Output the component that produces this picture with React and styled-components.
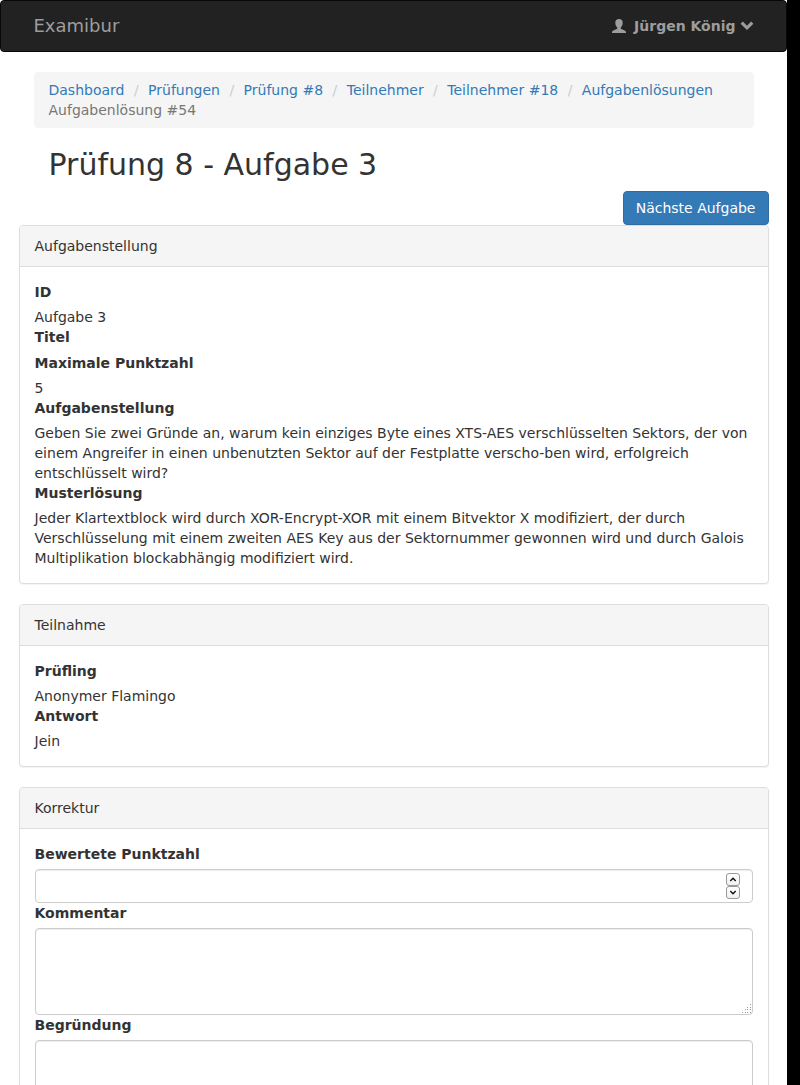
import React from 'react';
import styled, { createGlobalStyle } from 'styled-components';

const GlobalStyle = createGlobalStyle`
  *, *::before, *::after { box-sizing: border-box; }
  html { background: #000; overflow: hidden; }
  body {
    margin: 0;
    color: #333;
    font: 14px/20px "DejaVu Sans", Verdana, sans-serif;
  }
`;

const Page = styled.div`
  width: 787px;
  height: 1085px;
  overflow: hidden;
  background: #fff;
`;

const Navbar = styled.nav`
  height: 52px;
  margin-bottom: 20px;
  background: #222;
  border: 1px solid #080808;
  border-radius: 4px;
`;

const Container = styled.div`
  width: 750px;
  margin: 0 auto;
`;

const NavContent = styled(Container)`
  display: flex;
  align-items: center;
  justify-content: space-between;
  height: 50px;
  padding: 0 15px;
`;

const Brand = styled.a`
  color: #9d9d9d;
  font-size: 18px;
`;

const UserMenu = styled.a`
  display: flex;
  align-items: center;
  color: #9d9d9d;
  font-weight: bold;
`;

const UserName = styled.span`
  margin: 0 4px 0 8px;
`;

const Glyph = styled.svg`
  display: block;
  width: 14px;
  height: 14px;
  fill: currentColor;
`;

const Breadcrumb = styled.ol`
  list-style: none;
  margin: 0 15px 20px;
  padding: 8px 15px;
  background: #f5f5f5;
  border-radius: 4px;
`;

const Crumb = styled.li`
  display: inline-block;
  color: ${(p) => (p.$active ? '#777' : '#337ab7')};

  & + &::before {
    content: "/\\00a0";
    padding: 0 5px;
    color: #ccc;
  }
`;

const Title = styled.h2`
  margin: 0 30px 10px;
  font-size: 30px;
  font-weight: 400;
  line-height: 33px;
`;

const Actions = styled.div`
  display: flex;
  justify-content: flex-end;
`;

const Button = styled.button`
  height: 34px;
  padding: 6px 12px;
  font: inherit;
  color: #fff;
  background: #337ab7;
  border: 1px solid #2e6da4;
  border-radius: 4px;
`;

const Panel = styled.section`
  margin-bottom: 20px;
  background: #fff;
  border: 1px solid #ddd;
  border-radius: 4px;
  box-shadow: 0 1px 1px rgba(0, 0, 0, 0.05);
`;

const PanelHeading = styled.header`
  padding: 10px 15px;
  background: #f5f5f5;
  border-bottom: 1px solid #ddd;
  border-radius: 3px 3px 0 0;
`;

const PanelBody = styled.div`
  padding: 15px;
`;

const Label = styled.label`
  display: block;
  margin-bottom: 5px;
  font-weight: bold;
`;

const Value = styled.div`
  min-height: 1px;
`;

const Control = styled.div`
  display: flex;
  justify-content: flex-end;
  height: ${(p) => p.$height}px;
  background: #fff;
  border: 1px solid #ccc;
  border-radius: 4px;
  box-shadow: inset 0 1px 1px rgba(0, 0, 0, 0.075);
`;

const Spinner = styled.div`
  display: flex;
  flex-direction: column;
  margin: 3px 12px 0 0;
`;

const SpinButton = styled.span`
  display: flex;
  align-items: center;
  justify-content: center;
  width: 14px;
  height: 13px;
  background: linear-gradient(#fff, #f0f0f0);
  border: 1px solid #999;
  border-radius: 3px;
`;

const Arrow = styled.svg`
  width: 8px;
  height: 5px;
  fill: none;
  stroke: #111;
  stroke-width: 1.5;
`;

const Grip = styled.svg`
  width: 10px;
  height: 10px;
  align-self: flex-end;
  fill: #999;
`;

const crumbs = ['Dashboard', 'Prüfungen', 'Prüfung #8', 'Teilnehmer', 'Teilnehmer #18', 'Aufgabenlösungen'];

const task = [
  ['ID', 'Aufgabe 3'],
  ['Titel', ''],
  ['Maximale Punktzahl', '5'],
  ['Aufgabenstellung', 'Geben Sie zwei Gründe an, warum kein einziges Byte eines XTS-AES verschlüsselten Sektors, der von einem Angreifer in einen unbenutzten Sektor auf der Festplatte verscho-ben wird, erfolgreich entschlüsselt wird?'],
  ['Musterlösung', 'Jeder Klartextblock wird durch XOR-Encrypt-XOR mit einem Bitvektor X modifiziert, der durch Verschlüsselung mit einem zweiten AES Key aus der Sektornummer gewonnen wird und durch Galois Multiplikation blockabhängig modifiziert wird.'],
];

const participation = [
  ['Prüfling', 'Anonymer Flamingo'],
  ['Antwort', 'Jein'],
];

const gripDots = [[8, 0], [5, 3], [8, 3], [3, 5], [5, 5], [8, 5], [0, 8], [3, 8], [5, 8], [8, 8]];

function Fields({ items }) {
  return items.map(([label, value]) => (
    <React.Fragment key={label}>
      <Label as="div">{label}</Label>
      <Value>{value}</Value>
    </React.Fragment>
  ));
}

function TextArea() {
  return (
    <Control $height={87}>
      <Grip viewBox="0 0 10 10" shapeRendering="crispEdges">
        {gripDots.map(([x, y]) => <rect key={`${x}-${y}`} x={x} y={y} width="1" height="1" />)}
      </Grip>
    </Control>
  );
}

export default function App() {
  return (
    <>
      <GlobalStyle />
      <Page>
        <Navbar>
          <NavContent>
            <Brand>Examibur</Brand>
            <UserMenu>
              <Glyph viewBox="0 0 14 14">
                <path d="M7 0C4.7 0 3.3 1.3 3.3 3.5C3.3 5.7 4 7.5 5.2 8.4V9.8L1.3 11.6Q0 12.2 0 13.2V14H14V13.2Q14 12.2 12.7 11.6L8.8 9.8V8.4C10 7.5 10.7 5.7 10.7 3.5C10.7 1.3 9.3 0 7 0Z" />
              </Glyph>
              <UserName>Jürgen König</UserName>
              <Glyph viewBox="0 0 14 14">
                <path d="M2.8 2.5L7 6.7L11.2 2.5L13.4 4.7L7 11L.6 4.7Z" />
              </Glyph>
            </UserMenu>
          </NavContent>
        </Navbar>
        <Container>
          <Breadcrumb>
            {crumbs.map((c) => <React.Fragment key={c}><Crumb>{c}</Crumb>{' '}</React.Fragment>)}
            <Crumb $active>Aufgabenlösung #54</Crumb>
          </Breadcrumb>
          <Title>Prüfung 8 - Aufgabe 3</Title>
          <Actions><Button>Nächste Aufgabe</Button></Actions>
          <Panel>
            <PanelHeading>Aufgabenstellung</PanelHeading>
            <PanelBody><Fields items={task} /></PanelBody>
          </Panel>
          <Panel>
            <PanelHeading>Teilnahme</PanelHeading>
            <PanelBody><Fields items={participation} /></PanelBody>
          </Panel>
          <Panel>
            <PanelHeading>Korrektur</PanelHeading>
            <PanelBody>
              <Label>Bewertete Punktzahl</Label>
              <Control $height={34}>
                <Spinner>
                  <SpinButton><Arrow viewBox="0 0 8 5"><path d="M1.3 4L4 1.3L6.7 4" /></Arrow></SpinButton>
                  <SpinButton><Arrow viewBox="0 0 8 5"><path d="M1.3 1L4 3.7L6.7 1" /></Arrow></SpinButton>
                </Spinner>
              </Control>
              <Label>Kommentar</Label>
              <TextArea />
              <Label>Begründung</Label>
              <TextArea />
            </PanelBody>
          </Panel>
        </Container>
      </Page>
    </>
  );
}
